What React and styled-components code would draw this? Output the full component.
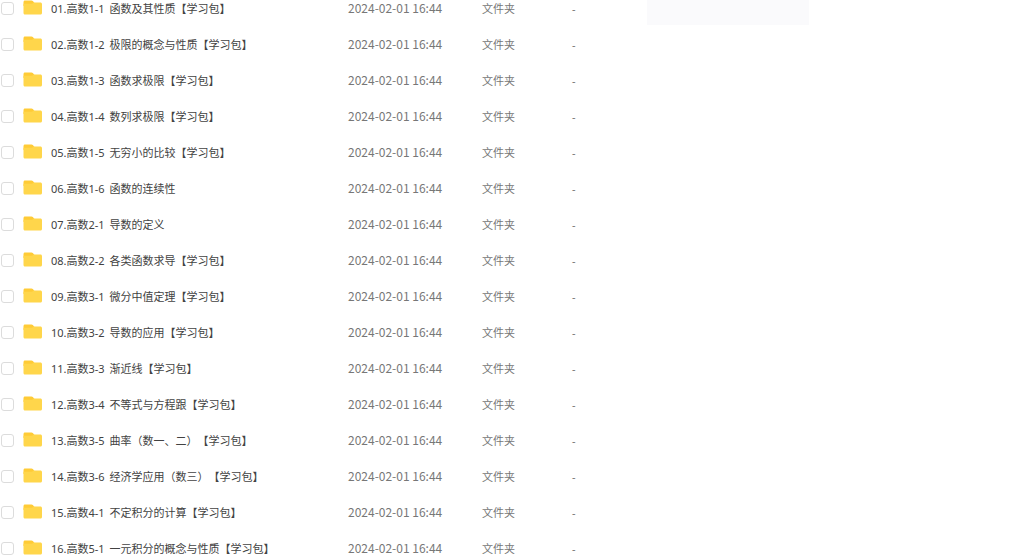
import styled, { createGlobalStyle } from "styled-components";

const GlobalStyle = createGlobalStyle`
  body {
    margin: 0;
    background: #fff;
    font-family: "Noto Sans", "Noto Sans CJK SC", sans-serif;
  }
`;

const Page = styled.main`
  display: grid;
  grid-template-columns: 647fr 162fr 215fr;
  align-items: start;
  height: 100vh;
  overflow: hidden;
`;

const FileTable = styled.table`
  width: 100%;
  border-collapse: collapse;
  table-layout: fixed;
  font-size: 11px;
  line-height: 18px;
`;

const Col = styled.col`
  width: ${(props) => props.$width};
`;

const Cell = styled.td`
  height: 18px;
  padding: 0 0 18px;
  color: #777;
  white-space: nowrap;
`;

const TextCell = styled(Cell)`
  vertical-align: baseline;
`;

const NameCell = styled(TextCell)`
  color: #424242;
  text-spacing-trim: space-all;
`;

const DateCell = styled(TextCell)`
  font-family: "Noto Sans CJK SC", sans-serif;
  font-size: 12px;
  line-height: 16px;
`;

const Code = styled.span`
  margin-right: 2px;
`;

const Check = styled.input`
  appearance: none;
  display: block;
  box-sizing: border-box;
  width: 13px;
  height: 13px;
  margin: 0 0 1px 1px;
  border: 1px solid #dcdcdc;
  border-radius: 3px;
  background: #fff;

  &:checked {
    background: #06a7ff;
    border-color: #06a7ff;
  }
`;

const Folder = styled.svg`
  display: block;
  width: 19px;
  height: 16px;
  margin-bottom: 2px;
`;

const SidePanel = styled.aside`
  height: 25px;
  background: #fafafc;
`;

const files = [
  { code: "01.高数1-1", title: "函数及其性质【学习包】" },
  { code: "02.高数1-2", title: "极限的概念与性质【学习包】" },
  { code: "03.高数1-3", title: "函数求极限【学习包】" },
  { code: "04.高数1-4", title: "数列求极限【学习包】" },
  { code: "05.高数1-5", title: "无穷小的比较【学习包】" },
  { code: "06.高数1-6", title: "函数的连续性" },
  { code: "07.高数2-1", title: "导数的定义" },
  { code: "08.高数2-2", title: "各类函数求导【学习包】" },
  { code: "09.高数3-1", title: "微分中值定理【学习包】" },
  { code: "10.高数3-2", title: "导数的应用【学习包】" },
  { code: "11.高数3-3", title: "渐近线【学习包】" },
  { code: "12.高数3-4", title: "不等式与方程跟【学习包】" },
  { code: "13.高数3-5", title: "曲率（数一、二）【学习包】" },
  { code: "14.高数3-6", title: "经济学应用（数三）【学习包】" },
  { code: "15.高数4-1", title: "不定积分的计算【学习包】" },
  { code: "16.高数5-1", title: "一元积分的概念与性质【学习包】" },
];

function FolderIcon() {
  return (
    <Folder viewBox="0 0 19 16" aria-hidden="true">
      <path
        d="M2 0.500h6.500c.5 0 .9.200 1.300.6L11.500 3v3H.5V2C.5 1.100 1.100.5 2 .5z"
        fill="#ffcb36"
      />
      <path
        d="M.5 3.800h7.500c.6 0 1-.1 1.400-.4l.7-.5c.3-.2.6-.3 1-.3h6.200c1 0 1.700.6 1.700 1.600v8.700c0 .9-.6 1.500-1.500 1.500H2c-.9 0-1.500-.6-1.500-1.500z"
        fill="#ffd64b"
      />
    </Folder>
  );
}

function FileRow({ id, code, title }) {
  return (
    <tr>
      <Cell>
        <Check type="checkbox" id={id} />
      </Cell>
      <Cell>
        <FolderIcon />
      </Cell>
      <NameCell>
        <label htmlFor={id}>
          <Code>{code}</Code> {title}
        </label>
      </NameCell>
      <DateCell>2024-02-01 16:44</DateCell>
      <TextCell>文件夹</TextCell>
      <TextCell>-</TextCell>
    </tr>
  );
}

export default function App() {
  return (
    <>
      <GlobalStyle />
      <Page>
        <FileTable>
          <colgroup>
            <Col $width="23px" />
            <Col $width="28px" />
            <Col />
            <Col $width="134px" />
            <Col $width="90px" />
            <Col $width="75px" />
          </colgroup>
          <tbody>
            {files.map((file, i) => (
              <FileRow key={file.code} id={`file-${i}`} {...file} />
            ))}
          </tbody>
        </FileTable>
        <SidePanel />
      </Page>
    </>
  );
}
